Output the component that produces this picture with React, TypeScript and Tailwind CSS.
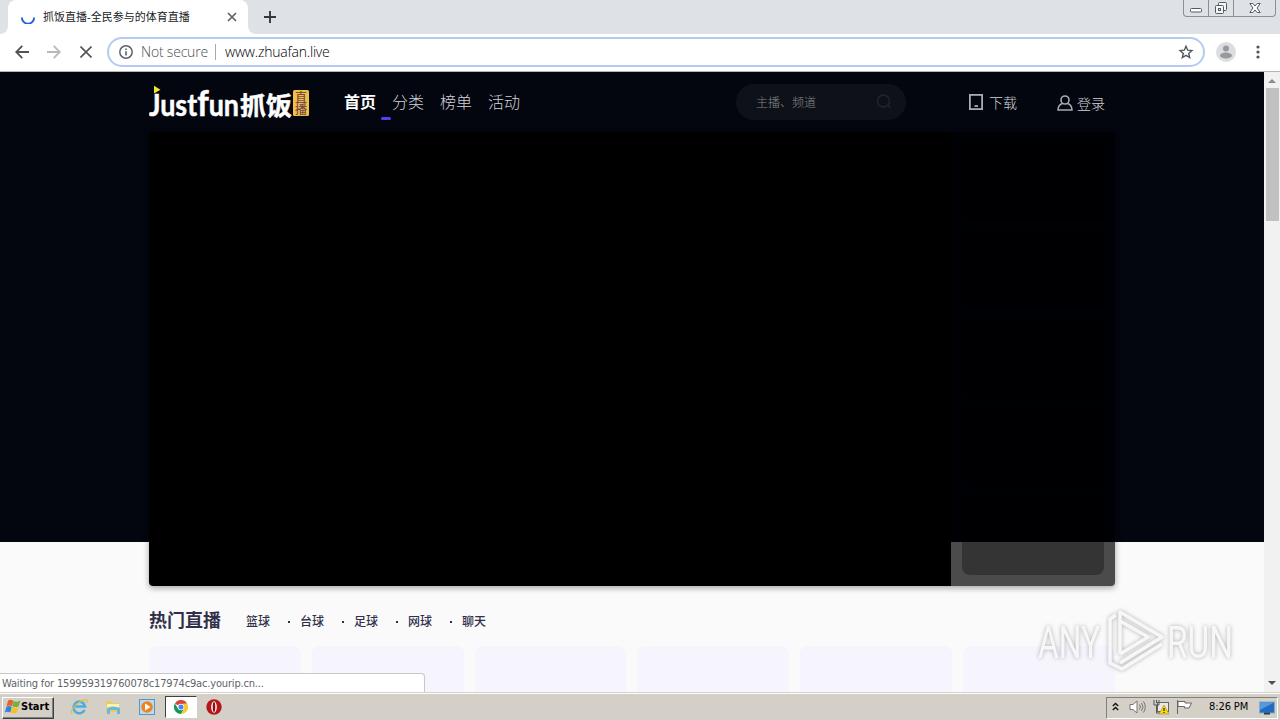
import React from 'react';
import clsx from 'clsx';

const NAV_ITEMS = ['首页', '分类', '榜单', '活动'];
const CATEGORIES = ['篮球', '台球', '足球', '网球', '聊天'];

const TabStrip: React.FC = () => (
  <div className="flex h-[34px] shrink-0 items-end justify-between bg-[#dee1e6]">
    <div className="flex h-full items-end">
      <div className="h-full w-2 bg-white">
        <div className="h-full w-full rounded-br-lg bg-[#dee1e6]" />
      </div>
      <div className="flex h-full w-60 items-center rounded-t-lg bg-white pr-[11px] pl-[13px]">
        <svg width="14" height="14" viewBox="0 0 14 14" className="shrink-0" fill="none">
          <path d="M.9 7.500a6.100 6.100 0 0 0 12.200 0" stroke="#1a66d6" strokeWidth="1.900" />
        </svg>
        <span className="ml-2 flex-1 whitespace-nowrap text-[11px] text-[#202124]">
          抓饭直播-全民参与的体育直播
        </span>
        <svg width="10" height="10" viewBox="0 0 10 10" className="shrink-0">
          <path d="M1 1l8 8M9 1l-8 8" stroke="#5f6368" strokeWidth="1.700" />
        </svg>
      </div>
      <div className="h-full w-2 bg-white">
        <div className="h-full w-full rounded-bl-lg bg-[#dee1e6]" />
      </div>
      <svg width="12" height="12" viewBox="0 0 12 12" className="mb-[11px] ml-2">
        <path d="M6 0v12M0 6h12" stroke="#34373b" strokeWidth="1.900" />
      </svg>
    </div>
    <div className="mr-[4px] flex h-[17px] self-start rounded-b-[4px] border border-t-0 border-[#8b8f97]">
      <div className="flex w-[25px] items-center justify-center border-r border-[#8b8f97]">
        <svg width="12" height="16" viewBox="0 0 12 16">
          <rect x=".5" y="8.500" width="11" height="3.500" rx="1" fill="#fff" stroke="#555a61" />
        </svg>
      </div>
      <div className="flex w-[25px] items-center justify-center border-r border-[#8b8f97]">
        <svg width="14" height="16" viewBox="0 0 14 16" fill="#f3f4f6" stroke="#555a61">
          <rect x="4.500" y="2.500" width="8" height="8" rx="1" />
          <rect x="1.500" y="5.500" width="8" height="8" rx="1" />
          <rect x="4.500" y="8.500" width="2" height="2" />
        </svg>
      </div>
      <div className="flex w-[41px] items-center justify-center">
        <svg width="12" height="16" viewBox="0 0 12 16">
          <path
            d="M.8 3.500h3L6 6l2.200-2.500h3L8 8l3.200 4.500h-3L6 10l-2.200 2.500h-3L4 8z"
            fill="#fff"
            stroke="#555a61"
          />
        </svg>
      </div>
    </div>
  </div>
);

const Toolbar: React.FC = () => (
  <div className="flex h-[38px] shrink-0 items-center border-b border-[#b4b6b9] bg-white pb-px pl-[15px]">
    <svg width="14" height="14" viewBox="0 0 14 14" fill="none" stroke="#505357" strokeWidth="1.800">
      <path d="M14 7H1.500M7.300 .8L1.200 7l6.100 6.200" />
    </svg>
    <svg width="14" height="14" viewBox="0 0 14 14" fill="none" stroke="#b7b9bc" strokeWidth="1.800" className="ml-[18px]">
      <path d="M0 7h12.500M6.700 .8L12.800 7l-6.100 6.200" />
    </svg>
    <svg width="12" height="12" viewBox="0 0 12 12" stroke="#505357" strokeWidth="1.600" className="ml-[19px]">
      <path d="M.5 .5l11 11M11.500 .5l-11 11" />
    </svg>
    <div className="ml-[15px] flex h-[30px] w-[1098px] items-center rounded-full border-2 border-[#b4cbf2] bg-white pr-[9px] pl-[10px]">
      <svg width="14" height="14" viewBox="0 0 14 14" fill="none" className="shrink-0">
        <circle cx="7" cy="7" r="6.200" stroke="#5f6368" strokeWidth="1.500" />
        <path d="M7 6.200v4.300M7 3.400v1.500" stroke="#5f6368" strokeWidth="1.600" />
      </svg>
      <span className="ml-2 w-[67px] whitespace-nowrap font-['Open_Sans'] text-[14px] leading-none font-light tracking-[-0.2px] text-[#4b4f54]">
        Not secure
      </span>
      <div className="ml-[7px] h-4 w-px bg-[#a5a8ac]" />
      <span className="ml-[9px] flex-1 font-['Open_Sans'] text-[14px] leading-none font-light tracking-[-0.2px] text-black">
        www.zhuafan.live
      </span>
      <svg width="16" height="16" viewBox="0 0 16 16" fill="none" stroke="#54585d" strokeWidth="1.400">
        <path d="M8 2.200l1.700 4 4.200.4-3.200 2.800 1 4.200L8 11.400l-3.700 2.200 1-4.200-3.200-2.800 4.200-.4z" />
      </svg>
    </div>
    <svg width="20" height="20" viewBox="0 0 20 20" className="ml-[11px]">
      <circle cx="10" cy="10" r="10" fill="#dcdde0" />
      <circle cx="10" cy="6.500" r="3" fill="#96999d" />
      <ellipse cx="10" cy="13.500" rx="6" ry="3" fill="#96999d" />
    </svg>
    <svg width="4" height="14" viewBox="0 0 4 14" fill="#505357" className="ml-5">
      <circle cx="2" cy="2" r="1.600" />
      <circle cx="2" cy="7" r="1.600" />
      <circle cx="2" cy="12" r="1.600" />
    </svg>
  </div>
);

const SiteLogo: React.FC = () => (
  <svg width="160" height="44" viewBox="0 -5 160 44" className="font-['Lato','Noto_Sans_CJK_SC',sans-serif]">
    <path d="M5 .8l6.500 3.900L5 8.600z" fill="#f0e32b" />
    <g fill="#fff" stroke="#fff" strokeWidth=".5" fontWeight="700">
      <text x="0" y="31" fontSize="30" textLength="90" lengthAdjust="spacingAndGlyphs">
        Just<tspan fontSize="36">f</tspan>un
      </text>
      <text x="91" y="29.500" fontSize="25" textLength="52" lengthAdjust="spacingAndGlyphs">抓饭</text>
    </g>
    <rect x="144" y="5" width="16" height="26" rx="1.500" fill="#efc246" />
    <g fill="#7a4a50" fontSize="12" fontWeight="500">
      <text x="146" y="16.500">直</text>
      <text x="146" y="28.500">播</text>
    </g>
  </svg>
);

const SiteHeader: React.FC = () => (
  <header className="flex h-[60px] items-center text-[#d2d3d6]">
    <SiteLogo />
    <nav className="mt-[2px] ml-[35px] flex gap-4 text-[16px] leading-6 font-light">
      {NAV_ITEMS.map((item, i) => (
        <a key={item} className={clsx('relative', i === 0 && 'font-bold text-white')}>
          {item}
          {i === 0 && <span className="absolute top-[26px] left-[37px] h-[3px] w-[10px] rounded-full bg-[#5a3ff0]" />}
        </a>
      ))}
    </nav>
    <div className="ml-[216px] flex h-9 w-[170px] items-center justify-between rounded-full bg-[#0e1118] pr-[14px] pl-5 text-[12px] font-light text-[#85878c]">
      <span className="mt-[2px]">主播、频道</span>
      <svg width="16" height="16" viewBox="0 0 16 16" fill="none" stroke="#22252c" strokeWidth="1.400">
        <circle cx="7.500" cy="7" r="6" />
        <path d="M12 11.500l2.500 2.500" />
      </svg>
    </div>
    <a className="ml-[63px] flex items-center gap-[6px] text-[14px] font-light">
      <svg width="14" height="16" viewBox="0 0 14 16" fill="none" stroke="#a9abb0" strokeWidth="1.800">
        <rect x=".9" y=".9" width="12.200" height="14.200" />
        <path d="M5.500 12h3.500" />
      </svg>
      <span className="mt-[2px]">下载</span>
    </a>
    <a className="ml-10 flex items-center gap-1 text-[14px] font-light">
      <svg width="16" height="16" viewBox="0 0 16 16" fill="none" stroke="#a9abb0" strokeWidth="1.600" className="mt-[2px]">
        <circle cx="8" cy="5" r="4" />
        <path d="M5.500 8.500C2.500 9.500 1 12 1 15h14c0-3-1.500-5.500-4.500-6.500" />
      </svg>
      <span className="mt-[4px]">登录</span>
    </a>
  </header>
);

const Stage: React.FC = () => (
  <div className="flex h-[454px] overflow-hidden rounded-b-[4px] shadow-[0_2px_6px_rgba(0,0,0,0.35)]">
    <div className="w-[802px] bg-black" />
    <div className="flex flex-1 flex-col gap-[11px] bg-black/70 p-[11px]">
      {[0, 1, 2, 3, 4].map(n => (
        <div key={n} className="flex-1 rounded-[8px] bg-black/30" />
      ))}
    </div>
  </div>
);

const HotLive: React.FC = () => (
  <section>
    <div className="flex h-[60px] items-center pt-[10px]">
      <h2 className="w-[97px] text-[18px] font-bold text-[#31304a]">热门直播</h2>
      <ul className="flex pt-[2px] text-[12px] font-medium text-[#31304a]">
        {CATEGORIES.map((name, i) => (
          <li key={name} className="flex w-[54px] items-center">
            {name}
            {i < CATEGORIES.length - 1 && <span className="ml-[18px] size-[2px] bg-[#31304a]" />}
          </li>
        ))}
      </ul>
    </div>
    <div className="grid grid-cols-6 gap-[11px]">
      {[0, 1, 2, 3, 4, 5].map(n => (
        <div key={n} className="h-[120px] rounded-[8px] bg-[#f6f4fd]" />
      ))}
    </div>
  </section>
);

const Watermark: React.FC = () => (
  <svg
    width="210"
    height="70"
    viewBox="0 0 210 70"
    className="absolute right-[36px] bottom-[17px] font-['Roboto',sans-serif] drop-shadow-[0_0_2px_rgba(0,0,0,0.3)]"
  >
    <g fill="#f7f7f8" fontSize="44">
      <text x="4" y="53" textLength="62" lengthAdjust="spacingAndGlyphs">ANY</text>
      <text x="133" y="53" textLength="66" lengthAdjust="spacingAndGlyphs">RUN</text>
    </g>
    <g fill="none" stroke="#f7f7f8" strokeWidth="3.500" strokeLinejoin="round">
      <path d="M86 49V7l42 25-42 26" />
      <path d="M82 10l-6 4v44l12 6 40-25" />
      <path d="M86 16l28 16-28 17" />
    </g>
  </svg>
);

const Scrollbar: React.FC = () => (
  <div className="flex w-4 shrink-0 flex-col items-center bg-[#f1f1f1]">
    <svg width="8" height="16" viewBox="0 0 8 16">
      <path d="M0 11l4-4 4 4z" fill="#8b8b8b" />
    </svg>
    <div className="h-[133px] w-[13px] bg-[#c1c1c1]" />
    <svg width="8" height="16" viewBox="0 0 8 16" className="mt-auto">
      <path d="M0 5l4 4 4-4z" fill="#505050" />
    </svg>
  </div>
);

const Taskbar: React.FC = () => (
  <footer className="flex h-7 shrink-0 items-center border-t border-[#d4d0c8] bg-[#d4d0c8] pr-[2px] pl-[2px] font-['DejaVu_Sans_Condensed','DejaVu_Sans',sans-serif] text-[11px] text-black shadow-[inset_0_1px_0_#fff]">
    <button className="mt-[2px] flex h-[22px] w-[52px] items-center border border-t-white border-r-[#404040] border-b-[#404040] border-l-white pl-px font-bold shadow-[inset_-1px_-1px_0_#808080]">
      <svg width="17" height="17" viewBox="0 1 15 15" className="shrink-0">
        <path d="M3.500 2.500c1.500-1 3-1 4.800 0L7 7.500c-1.500-1-3-1-4.700 0z" fill="#e8602c" />
        <path d="M8.600 2.700c1.800 1 3.900 1 5.900-.3L13 7.400c-1.800 1-3.500 1-5.700 0z" fill="#72b244" />
        <path d="M2.100 8c1.500-1 3-1 4.700 0l-1.300 4.900c-1.500-1-3-1-4.700 0z" fill="#3482d5" />
        <path d="M7.200 8c1.700 1 3.600 1 5.600 0l-1.400 4.900c-1.800 1-3.500 1-5.500 0z" fill="#f4bf29" />
      </svg>
      <span className="mb-px">Start</span>
    </button>
    <svg width="18" height="18" viewBox="0 0 18 18" fill="none" className="ml-4">
      <path d="M14.500 12a5.800 5.800 0 1 1 .5-3.500H5" stroke="#46aee4" strokeWidth="2.600" />
      <path d="M2 15.500C-1 12 11 .5 16.500 2c1 .5.500 2 0 3" stroke="#e6bd43" strokeWidth="1.300" />
    </svg>
    <svg width="16" height="16" viewBox="0 0 16 16" className="ml-[17px]">
      <path d="M1 2h5l1 2h7v9H1z" fill="#eac967" />
      <path d="M2 5h12v4H2z" fill="#fff0ad" />
      <path d="M2 9q6-3 13 0v6h-3v-4H5v4H2z" fill="#68b9dc" />
    </svg>
    <svg width="16" height="16" viewBox="0 0 16 16" className="ml-[18px]">
      <rect x=".5" y=".5" width="15" height="15" fill="#b6dcf5" stroke="#5c94c5" />
      <circle cx="8" cy="8" r="5.800" fill="#ee841b" />
      <path d="M6 4.500l5.500 3.500L6 11.500z" fill="#fff" />
    </svg>
    <div className="ml-[10px] flex h-[22px] w-8 items-center justify-center border border-t-[#404040] border-r-white border-b-white border-l-[#404040] bg-white">
      <svg width="14" height="14" viewBox="0 0 14 14">
        <path d="M7 7L.9 3.500a7 7 0 0 1 12.200 0z" fill="#db4437" />
        <path d="M.9 3.500A7 7 0 0 0 7 14l3-5.300-6-.2z" fill="#159957" />
        <path d="M13.100 3.500A7 7 0 0 1 7 14l3.200-5.500L9 3.500z" fill="#f8c92c" />
        <circle cx="7" cy="7" r="3.200" fill="#fff" />
        <circle cx="7" cy="7" r="2.500" fill="#4285f4" />
      </svg>
    </div>
    <svg width="16" height="16" viewBox="0 0 16 16" className="ml-[9px]">
      <circle cx="8" cy="8" r="7.700" fill="#b5161a" />
      <ellipse cx="8" cy="8" rx="2.800" ry="5.800" fill="#fff" />
      <ellipse cx="8" cy="8" rx="1.300" ry="5" fill="#8f0e12" />
    </svg>
    <div className="mt-[2px] ml-auto flex h-[22px] w-[172px] items-center border border-t-[#808080] border-r-white border-b-white border-l-[#808080] pl-[5px]">
      <svg width="7" height="9" viewBox="0 0 7 9" fill="none" stroke="#111" strokeWidth="1.400" className="mb-[3px]">
        <path d="M.8 4l2.700-2.500L6.200 4M.8 8l2.700-2.500L6.200 8" />
      </svg>
      <svg width="17" height="16" viewBox="0 0 17 16" className="mb-px ml-[10px]" fill="none" stroke="#777">
        <path d="M1 5.500h3L8 2v12l-4-3.500H1z" fill="#fff" />
        <path d="M10.500 5.500q1.800 2.500 0 5M12.500 4q3 4 0 8M14.500 2.500q3.500 5.500 0 11" />
      </svg>
      <svg width="17" height="16" viewBox="0 0 17 16" className="mb-px ml-[7px]">
        <rect x="4.500" y="3.500" width="11" height="9" fill="#e9e9e9" stroke="#666" />
        <path d="M1 1v5h5V1M3.500 1v3M3.500 6v8H7" fill="none" stroke="#555" />
        <path d="M11 6l5 9H6z" fill="#fbd717" stroke="#a78b00" strokeWidth=".6" />
        <path d="M11 9v3M11 13v1" stroke="#222" strokeWidth="1.200" />
      </svg>
      <svg width="17" height="16" viewBox="0 0 17 16" className="mb-px ml-[6px]" fill="#fff" stroke="#666">
        <path d="M1.500 1v14" />
        <path d="M2 2.500h7v1.500h6.500L13 9H8.500V7.500H2z" />
      </svg>
      <span className="ml-4 w-[40px] whitespace-nowrap tracking-[-0.1px]">8:26 PM</span>
      <svg width="16" height="14" viewBox="0 0 16 14" className="ml-[10px]">
        <rect x=".5" y="1" width="15" height="11" fill="#236bc0" stroke="#8ba9c9" />
        <path d="M1 1.500h14L1 9z" fill="#5599df" />
        <path d="M5 12.500h6" stroke="#243b5a" strokeWidth="2" />
      </svg>
    </div>
  </footer>
);

const App: React.FC = () => (
  <div className="flex h-[720px] w-[1280px] flex-col overflow-hidden font-['Liberation_Sans','Noto_Sans_CJK_SC',sans-serif]">
    <TabStrip />
    <Toolbar />
    <div className="relative flex min-h-0 flex-1">
      {/* the dark band ends behind the stage, its side panel lets it show through */}
      <main className="w-[1264px] overflow-hidden bg-[linear-gradient(#03060f_470px,#fafafa_470px)] pl-[149px]">
        <div className="w-[966px]">
          <SiteHeader />
          <Stage />
          <HotLive />
        </div>
      </main>
      <Scrollbar />
      <Watermark />
      <div className="absolute bottom-0 left-0 flex h-[19px] w-[425px] items-center rounded-tr-[4px] border-t border-r border-[#c8c8cc] bg-white pt-[2px] pl-[2px] font-['DejaVu_Sans_Condensed','DejaVu_Sans',sans-serif] text-[11px] tracking-[-0.17px] whitespace-nowrap text-[#5f6368]">
        Waiting for 159959319760078c17974c9ac.yourip.cn...
      </div>
    </div>
    <Taskbar />
  </div>
);

export default App;
